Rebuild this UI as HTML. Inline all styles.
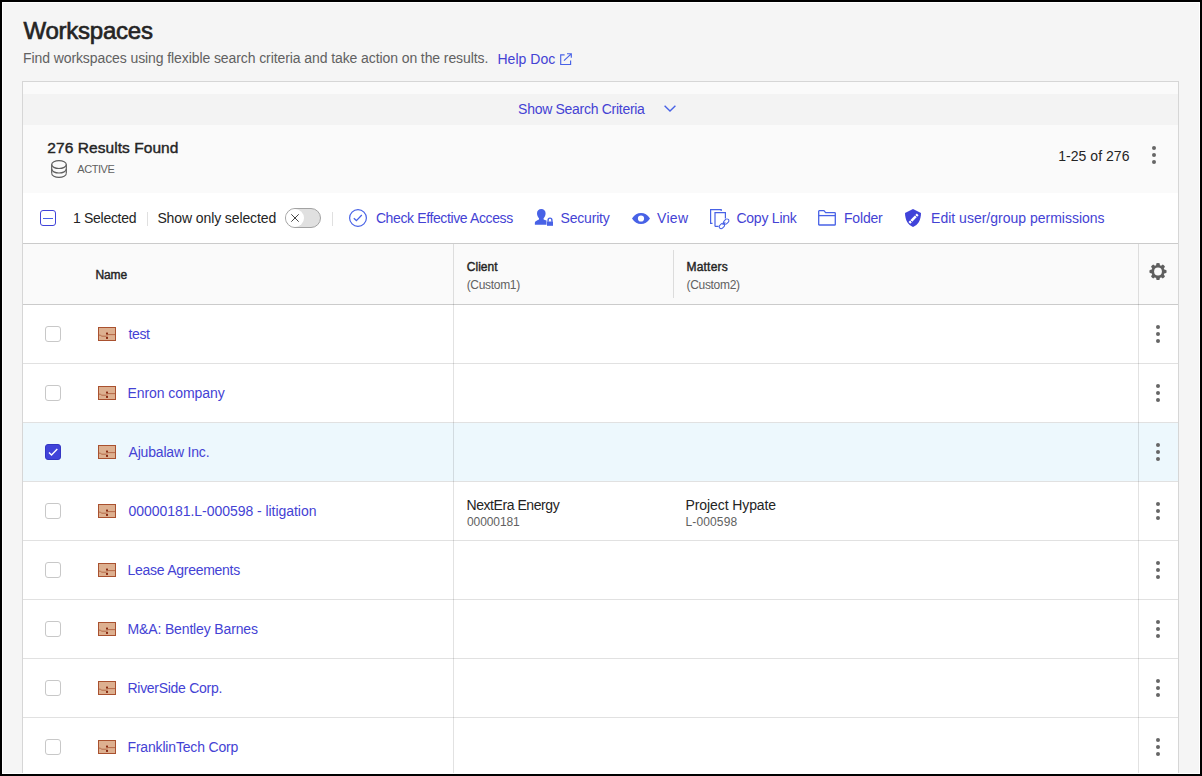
<!DOCTYPE html>
<html><head><meta charset="utf-8">
<style>
*{box-sizing:border-box;margin:0;padding:0}
html,body{width:1202px;height:776px;overflow:hidden;background:#000}
body{font-family:"Liberation Sans",sans-serif;position:relative}
.a{position:absolute;white-space:nowrap;line-height:1}
.r{position:absolute}
svg{position:absolute;overflow:visible}
</style></head><body>
<div class="r" style="left:2px;top:2px;width:1198px;height:772px;background:#fff"></div>
<div class="r" style="left:3px;top:3px;width:1196px;height:770px;background:#f5f5f5"></div>
<div class="a" style="left:23.5px;top:18.98px;font-size:24px;font-weight:400;color:#242424;letter-spacing:-0.244px;-webkit-text-stroke:0.65px #242424">Workspaces</div>
<div class="a" style="left:23px;top:50.55px;font-size:14px;font-weight:400;color:#616161;letter-spacing:-0.091px;">Find workspaces using flexible search criteria and take action on the results.</div>
<div class="a" style="left:497.4px;top:51.65px;font-size:14px;font-weight:400;color:#4442d4;letter-spacing:0.05px;">Help Doc</div>
<svg style="left:560px;top:53px" width="12" height="12" viewBox="0 0 12 12"><path d="M4.6 1.9 H0.7 V11.5 H10.6 V7.6" fill="none" stroke="#4862e6" stroke-width="1.15"/><path d="M4 7.7 L11.2 0.8 M7 0.7 H11.3 V4.7" fill="none" stroke="#4862e6" stroke-width="1.15"/></svg>
<div class="r" style="left:22px;top:81px;width:1157px;height:700px;border:1px solid #d6d6d6;background:#fafafa"></div>
<div class="r" style="left:23px;top:94px;width:1155px;height:31px;background:#f3f3f3"></div>
<div class="a" style="left:518.1px;top:102.45px;font-size:14px;font-weight:400;color:#4442d4;letter-spacing:-0.289px;">Show Search Criteria</div>
<svg style="left:664px;top:105px" width="12" height="8" viewBox="0 0 12 8"><path d="M0.6 0.8 L6 6 L11.4 0.8" fill="none" stroke="#4862e6" stroke-width="1.4"/></svg>
<div class="a" style="left:47.3px;top:139.68px;font-size:15.5px;font-weight:400;color:#242424;letter-spacing:0.06px;-webkit-text-stroke:0.4px #242424">276 Results Found</div>
<svg style="left:51px;top:160px" width="16" height="18" viewBox="0 0 16 18"><g fill="none" stroke="#5f5f5f" stroke-width="1.2"><ellipse cx="8" cy="4.6" rx="7.3" ry="3.9"/><path d="M0.7 4.6 V13.4 M15.3 4.6 V13.4"/><path d="M0.7 9.1 A7.3 3.9 0 0 0 15.3 9.1"/><path d="M0.7 13.4 A7.3 3.9 0 0 0 15.3 13.4"/></g></svg>
<div class="a" style="left:77.3px;top:164.39px;font-size:11px;font-weight:400;color:#616161;letter-spacing:-0.45px;">ACTIVE</div>
<div class="a" style="left:1058.3px;top:148.55px;font-size:14px;font-weight:400;color:#242424;letter-spacing:0.03px;">1-25 of 276</div>
<div class="r" style="left:1152px;top:146px;width:4px;height:4px;border-radius:50%;background:#666"></div><div class="r" style="left:1152px;top:153px;width:4px;height:4px;border-radius:50%;background:#666"></div><div class="r" style="left:1152px;top:160px;width:4px;height:4px;border-radius:50%;background:#666"></div>
<div class="r" style="left:23px;top:193px;width:1155px;height:51px;background:#fff;border-bottom:1px solid #cbcbcb"></div>
<div class="r" style="left:40px;top:210px;width:16px;height:16px;border:1.5px solid #4043d9;border-radius:3px;background:#fff"></div>
<div class="r" style="left:43px;top:217.5px;width:10px;height:1px;background:#4862e6"></div>
<div class="a" style="left:73px;top:211.35px;font-size:14px;font-weight:400;color:#242424;letter-spacing:-0.3px;">1 Selected</div>
<div class="r" style="left:147px;top:212px;width:1px;height:14px;background:#e0e0e0"></div>
<div class="a" style="left:157.4px;top:211.35px;font-size:14px;font-weight:400;color:#242424;letter-spacing:-0.106px;">Show only selected</div>
<div class="r" style="left:285px;top:208px;width:36px;height:20px;border:1px solid #a3a3a3;border-radius:10px;background:#e0e0e0"></div>
<div class="r" style="left:286px;top:209px;width:18px;height:18px;border-radius:50%;background:#fff"></div>
<svg style="left:291px;top:214px" width="8" height="8" viewBox="0 0 8 8"><path d="M0.3 0.3 L7.7 7.7 M7.7 0.3 L0.3 7.7" stroke="#444" stroke-width="1"/></svg>
<div class="r" style="left:332px;top:212px;width:1px;height:14px;background:#e0e0e0"></div>
<svg style="left:349px;top:209px" width="18" height="18" viewBox="0 0 18 18"><circle cx="9" cy="9" r="8.4" fill="none" stroke="#4862e6" stroke-width="1.2"/><path d="M4.8 9.3 L7.4 11.6 L12.8 6" fill="none" stroke="#4862e6" stroke-width="1.3"/></svg>
<div class="a" style="left:375.9px;top:211.35px;font-size:14px;font-weight:400;color:#4442d4;letter-spacing:-0.376px;">Check Effective Access</div>
<svg style="left:534px;top:208px" width="20" height="19" viewBox="0 0 20 19"><g fill="#4862e6"><path d="M7.3 1 C4.8 1 3 2.8 3 5.3 C3 7.2 3.8 9 5 10.3 V11.6 C3.5 12.5 1.5 13 1 14.2 C0.8 14.6 0.8 16.8 1 16.8 H12.5 V12.6 C11.5 12.1 10.3 11.9 9.6 11.6 V10.3 C10.8 9 11.6 7.2 11.6 5.3 C11.6 2.8 9.8 1 7.3 1 Z"/><rect x="13" y="13.5" width="6" height="4.3"/><path d="M14.1 13.8 V12 A1.9 1.9 0 0 1 17.9 12 V13.8" fill="none" stroke="#4862e6" stroke-width="1.4"/></g></svg>
<div class="a" style="left:560.5px;top:211.35px;font-size:14px;font-weight:400;color:#4442d4;letter-spacing:-0.186px;">Security</div>
<svg style="left:632px;top:213px" width="18" height="11" viewBox="0 0 18 11"><path d="M0 5.5 C2.5 1.6 5.5 0 9 0 C12.5 0 15.5 1.6 18 5.5 C15.5 9.4 12.5 11 9 11 C5.5 11 2.5 9.4 0 5.5 Z M9 2.4 A3.1 3.1 0 1 0 9 8.6 A3.1 3.1 0 1 0 9 2.4 Z" fill="#4862e6" fill-rule="evenodd"/></svg>
<div class="a" style="left:657px;top:211.35px;font-size:14px;font-weight:400;color:#4442d4;letter-spacing:0.333px;">View</div>
<svg style="left:710px;top:209px" width="19" height="19" viewBox="0 0 19 19"><g fill="none" stroke="#4862e6" stroke-width="1.2"><path d="M2.5 14.3 H0.6 V0.6 H11.2 V2"/><path d="M5 17.4 V3.6 H15.4 V9.5 M8.6 17.4 H5"/></g><g fill="none" stroke="#4862e6" stroke-width="1.05"><rect x="-3" y="-1.9" width="6" height="3.8" rx="1.9" transform="translate(11.9 17) rotate(-45)"/><rect x="-3" y="-1.9" width="6" height="3.8" rx="1.9" transform="translate(16.2 12.6) rotate(-45)"/><path d="M12.6 15.9 L15.3 13.4" /></g></svg>
<div class="a" style="left:736.4px;top:211.35px;font-size:14px;font-weight:400;color:#4442d4;letter-spacing:-0.225px;">Copy Link</div>
<svg style="left:818px;top:210px" width="18" height="16" viewBox="0 0 18 16"><g fill="none" stroke="#4862e6" stroke-width="1.3" stroke-linejoin="round"><path d="M0.7 14.4 V1.3 Q0.7 0.7 1.3 0.7 H6 L7.6 2.6 H16.6 Q17.3 2.6 17.3 3.3 V14.4 Q17.3 15 16.6 15 H1.3 Q0.7 15 0.7 14.4 Z"/><path d="M0.7 5.6 H17.3"/></g></svg>
<div class="a" style="left:844px;top:211.35px;font-size:14px;font-weight:400;color:#4442d4;letter-spacing:-0.18px;">Folder</div>
<svg style="left:905px;top:209px" width="16" height="18" viewBox="0 0 16 18"><path d="M8 0 L16 4 C16 11 13 16 8 18 C3 16 0 11 0 4 Z" fill="#4043d9"/><path d="M4.4 13.9 L12.7 5.4" stroke="#fff" stroke-width="2.5"/><path d="M5.3 11.3 L7.3 13.3 M10 6.1 L12 8.1" stroke="#4043d9" stroke-width="0.9"/></svg>
<div class="a" style="left:931.1px;top:211.35px;font-size:14px;font-weight:400;color:#4442d4;letter-spacing:0px;">Edit user/group permissions</div>
<div class="r" style="left:23px;top:244px;width:1155px;height:61px;background:#fafafa;border-bottom:1px solid #cbcbcb"></div>
<div class="a" style="left:95.6px;top:268.64px;font-size:12px;font-weight:400;color:#242424;letter-spacing:-0.167px;-webkit-text-stroke:0.4px #242424">Name</div>
<div class="a" style="left:466.7px;top:260.84px;font-size:12px;font-weight:400;color:#242424;letter-spacing:0.06px;-webkit-text-stroke:0.4px #242424">Client</div>
<div class="a" style="left:466.7px;top:279.34px;font-size:12px;font-weight:400;color:#616161;letter-spacing:-0.312px;">(Custom1)</div>
<div class="r" style="left:673px;top:250px;width:1px;height:48px;background:#dcdcdc"></div>
<div class="a" style="left:686.5px;top:260.84px;font-size:12px;font-weight:400;color:#242424;letter-spacing:0.2px;-webkit-text-stroke:0.4px #242424">Matters</div>
<div class="a" style="left:686.5px;top:279.34px;font-size:12px;font-weight:400;color:#616161;letter-spacing:-0.312px;">(Custom2)</div>
<svg style="left:1149px;top:263px" width="18" height="17" viewBox="0 0 18 17"><g transform="translate(9 8.5)" fill="#5f5f5f"><path d="M-2 -5.5 L-1.6 -8.3 Q0 -8.9 1.6 -8.3 L2 -5.5 Z" transform="rotate(0)"/><path d="M-2 -5.5 L-1.6 -8.3 Q0 -8.9 1.6 -8.3 L2 -5.5 Z" transform="rotate(45)"/><path d="M-2 -5.5 L-1.6 -8.3 Q0 -8.9 1.6 -8.3 L2 -5.5 Z" transform="rotate(90)"/><path d="M-2 -5.5 L-1.6 -8.3 Q0 -8.9 1.6 -8.3 L2 -5.5 Z" transform="rotate(135)"/><path d="M-2 -5.5 L-1.6 -8.3 Q0 -8.9 1.6 -8.3 L2 -5.5 Z" transform="rotate(180)"/><path d="M-2 -5.5 L-1.6 -8.3 Q0 -8.9 1.6 -8.3 L2 -5.5 Z" transform="rotate(225)"/><path d="M-2 -5.5 L-1.6 -8.3 Q0 -8.9 1.6 -8.3 L2 -5.5 Z" transform="rotate(270)"/><path d="M-2 -5.5 L-1.6 -8.3 Q0 -8.9 1.6 -8.3 L2 -5.5 Z" transform="rotate(315)"/><circle r="6.6"/></g><circle cx="9" cy="8.5" r="3.9" fill="#fafafa"/></svg>
<div class="r" style="left:23px;top:305px;width:1155px;height:59px;background:#fff;border-bottom:1px solid #e1e1e1"></div>
<div class="r" style="left:45px;top:326px;width:16px;height:16px;border:1px solid #c8c8c8;border-radius:3px;background:#fff"></div>
<svg style="left:98px;top:327px" width="18" height="14" viewBox="0 0 18 14"><rect x="0.5" y="0.5" width="17" height="13" fill="#ddb090" stroke="#a9512f" stroke-width="1"/><path d="M0.8 8 Q2.8 8.1 3.8 9.2 H8.7 M9.3 7.6 H17" fill="none" stroke="#b0613f" stroke-width="0.9"/><rect x="8" y="5.6" width="2" height="2" fill="#8a2b12"/><rect x="8" y="9.9" width="2" height="2" fill="#8a2b12"/><rect x="8.3" y="7.6" width="1.4" height="2.3" fill="#c58a6a"/></svg>
<div class="a" style="left:128.5px;top:327.15px;font-size:14px;font-weight:400;color:#4442d4;letter-spacing:-0.4px;">test</div>
<div class="r" style="left:1156px;top:325px;width:4px;height:4px;border-radius:50%;background:#666"></div><div class="r" style="left:1156px;top:332px;width:4px;height:4px;border-radius:50%;background:#666"></div><div class="r" style="left:1156px;top:339px;width:4px;height:4px;border-radius:50%;background:#666"></div>
<div class="r" style="left:23px;top:364px;width:1155px;height:59px;background:#fff;border-bottom:1px solid #e1e1e1"></div>
<div class="r" style="left:45px;top:385px;width:16px;height:16px;border:1px solid #c8c8c8;border-radius:3px;background:#fff"></div>
<svg style="left:98px;top:386px" width="18" height="14" viewBox="0 0 18 14"><rect x="0.5" y="0.5" width="17" height="13" fill="#ddb090" stroke="#a9512f" stroke-width="1"/><path d="M0.8 8 Q2.8 8.1 3.8 9.2 H8.7 M9.3 7.6 H17" fill="none" stroke="#b0613f" stroke-width="0.9"/><rect x="8" y="5.6" width="2" height="2" fill="#8a2b12"/><rect x="8" y="9.9" width="2" height="2" fill="#8a2b12"/><rect x="8.3" y="7.6" width="1.4" height="2.3" fill="#c58a6a"/></svg>
<div class="a" style="left:127.5px;top:386.15px;font-size:14px;font-weight:400;color:#4442d4;letter-spacing:-0.067px;">Enron company</div>
<div class="r" style="left:1156px;top:384px;width:4px;height:4px;border-radius:50%;background:#666"></div><div class="r" style="left:1156px;top:391px;width:4px;height:4px;border-radius:50%;background:#666"></div><div class="r" style="left:1156px;top:398px;width:4px;height:4px;border-radius:50%;background:#666"></div>
<div class="r" style="left:23px;top:423px;width:1155px;height:59px;background:#edf8fd;border-bottom:1px solid #e1e1e1"></div>
<div class="r" style="left:45px;top:444px;width:16px;height:16px;border:1px solid #3336c4;border-radius:3px;background:#4043d9"></div>
<svg style="left:45px;top:444px" width="16" height="16" viewBox="0 0 16 16"><path d="M4 8.6 L6.5 11 L12.3 5" fill="none" stroke="#fff" stroke-width="1.4"/></svg>
<svg style="left:98px;top:445px" width="18" height="14" viewBox="0 0 18 14"><rect x="0.5" y="0.5" width="17" height="13" fill="#ddb090" stroke="#a9512f" stroke-width="1"/><path d="M0.8 8 Q2.8 8.1 3.8 9.2 H8.7 M9.3 7.6 H17" fill="none" stroke="#b0613f" stroke-width="0.9"/><rect x="8" y="5.6" width="2" height="2" fill="#8a2b12"/><rect x="8" y="9.9" width="2" height="2" fill="#8a2b12"/><rect x="8.3" y="7.6" width="1.4" height="2.3" fill="#c58a6a"/></svg>
<div class="a" style="left:128.5px;top:445.15px;font-size:14px;font-weight:400;color:#4442d4;letter-spacing:-0.183px;">Ajubalaw Inc.</div>
<div class="r" style="left:1156px;top:443px;width:4px;height:4px;border-radius:50%;background:#666"></div><div class="r" style="left:1156px;top:450px;width:4px;height:4px;border-radius:50%;background:#666"></div><div class="r" style="left:1156px;top:457px;width:4px;height:4px;border-radius:50%;background:#666"></div>
<div class="r" style="left:23px;top:482px;width:1155px;height:59px;background:#fff;border-bottom:1px solid #e1e1e1"></div>
<div class="r" style="left:45px;top:503px;width:16px;height:16px;border:1px solid #c8c8c8;border-radius:3px;background:#fff"></div>
<svg style="left:98px;top:504px" width="18" height="14" viewBox="0 0 18 14"><rect x="0.5" y="0.5" width="17" height="13" fill="#ddb090" stroke="#a9512f" stroke-width="1"/><path d="M0.8 8 Q2.8 8.1 3.8 9.2 H8.7 M9.3 7.6 H17" fill="none" stroke="#b0613f" stroke-width="0.9"/><rect x="8" y="5.6" width="2" height="2" fill="#8a2b12"/><rect x="8" y="9.9" width="2" height="2" fill="#8a2b12"/><rect x="8.3" y="7.6" width="1.4" height="2.3" fill="#c58a6a"/></svg>
<div class="a" style="left:128.5px;top:504.15px;font-size:14px;font-weight:400;color:#4442d4;letter-spacing:-0.041px;">00000181.L-000598 - litigation</div>
<div class="r" style="left:1156px;top:502px;width:4px;height:4px;border-radius:50%;background:#666"></div><div class="r" style="left:1156px;top:509px;width:4px;height:4px;border-radius:50%;background:#666"></div><div class="r" style="left:1156px;top:516px;width:4px;height:4px;border-radius:50%;background:#666"></div>
<div class="r" style="left:23px;top:541px;width:1155px;height:59px;background:#fff;border-bottom:1px solid #e1e1e1"></div>
<div class="r" style="left:45px;top:562px;width:16px;height:16px;border:1px solid #c8c8c8;border-radius:3px;background:#fff"></div>
<svg style="left:98px;top:563px" width="18" height="14" viewBox="0 0 18 14"><rect x="0.5" y="0.5" width="17" height="13" fill="#ddb090" stroke="#a9512f" stroke-width="1"/><path d="M0.8 8 Q2.8 8.1 3.8 9.2 H8.7 M9.3 7.6 H17" fill="none" stroke="#b0613f" stroke-width="0.9"/><rect x="8" y="5.6" width="2" height="2" fill="#8a2b12"/><rect x="8" y="9.9" width="2" height="2" fill="#8a2b12"/><rect x="8.3" y="7.6" width="1.4" height="2.3" fill="#c58a6a"/></svg>
<div class="a" style="left:127.5px;top:563.15px;font-size:14px;font-weight:400;color:#4442d4;letter-spacing:-0.267px;">Lease Agreements</div>
<div class="r" style="left:1156px;top:561px;width:4px;height:4px;border-radius:50%;background:#666"></div><div class="r" style="left:1156px;top:568px;width:4px;height:4px;border-radius:50%;background:#666"></div><div class="r" style="left:1156px;top:575px;width:4px;height:4px;border-radius:50%;background:#666"></div>
<div class="r" style="left:23px;top:600px;width:1155px;height:59px;background:#fff;border-bottom:1px solid #e1e1e1"></div>
<div class="r" style="left:45px;top:621px;width:16px;height:16px;border:1px solid #c8c8c8;border-radius:3px;background:#fff"></div>
<svg style="left:98px;top:622px" width="18" height="14" viewBox="0 0 18 14"><rect x="0.5" y="0.5" width="17" height="13" fill="#ddb090" stroke="#a9512f" stroke-width="1"/><path d="M0.8 8 Q2.8 8.1 3.8 9.2 H8.7 M9.3 7.6 H17" fill="none" stroke="#b0613f" stroke-width="0.9"/><rect x="8" y="5.6" width="2" height="2" fill="#8a2b12"/><rect x="8" y="9.9" width="2" height="2" fill="#8a2b12"/><rect x="8.3" y="7.6" width="1.4" height="2.3" fill="#c58a6a"/></svg>
<div class="a" style="left:127.5px;top:622.15px;font-size:14px;font-weight:400;color:#4442d4;letter-spacing:-0.144px;">M&amp;A: Bentley Barnes</div>
<div class="r" style="left:1156px;top:620px;width:4px;height:4px;border-radius:50%;background:#666"></div><div class="r" style="left:1156px;top:627px;width:4px;height:4px;border-radius:50%;background:#666"></div><div class="r" style="left:1156px;top:634px;width:4px;height:4px;border-radius:50%;background:#666"></div>
<div class="r" style="left:23px;top:659px;width:1155px;height:59px;background:#fff;border-bottom:1px solid #e1e1e1"></div>
<div class="r" style="left:45px;top:680px;width:16px;height:16px;border:1px solid #c8c8c8;border-radius:3px;background:#fff"></div>
<svg style="left:98px;top:681px" width="18" height="14" viewBox="0 0 18 14"><rect x="0.5" y="0.5" width="17" height="13" fill="#ddb090" stroke="#a9512f" stroke-width="1"/><path d="M0.8 8 Q2.8 8.1 3.8 9.2 H8.7 M9.3 7.6 H17" fill="none" stroke="#b0613f" stroke-width="0.9"/><rect x="8" y="5.6" width="2" height="2" fill="#8a2b12"/><rect x="8" y="9.9" width="2" height="2" fill="#8a2b12"/><rect x="8.3" y="7.6" width="1.4" height="2.3" fill="#c58a6a"/></svg>
<div class="a" style="left:127.5px;top:681.15px;font-size:14px;font-weight:400;color:#4442d4;letter-spacing:-0.286px;">RiverSide Corp.</div>
<div class="r" style="left:1156px;top:679px;width:4px;height:4px;border-radius:50%;background:#666"></div><div class="r" style="left:1156px;top:686px;width:4px;height:4px;border-radius:50%;background:#666"></div><div class="r" style="left:1156px;top:693px;width:4px;height:4px;border-radius:50%;background:#666"></div>
<div class="r" style="left:23px;top:718px;width:1155px;height:59px;background:#fff;border-bottom:1px solid #e1e1e1"></div>
<div class="r" style="left:45px;top:739px;width:16px;height:16px;border:1px solid #c8c8c8;border-radius:3px;background:#fff"></div>
<svg style="left:98px;top:740px" width="18" height="14" viewBox="0 0 18 14"><rect x="0.5" y="0.5" width="17" height="13" fill="#ddb090" stroke="#a9512f" stroke-width="1"/><path d="M0.8 8 Q2.8 8.1 3.8 9.2 H8.7 M9.3 7.6 H17" fill="none" stroke="#b0613f" stroke-width="0.9"/><rect x="8" y="5.6" width="2" height="2" fill="#8a2b12"/><rect x="8" y="9.9" width="2" height="2" fill="#8a2b12"/><rect x="8.3" y="7.6" width="1.4" height="2.3" fill="#c58a6a"/></svg>
<div class="a" style="left:127.5px;top:740.15px;font-size:14px;font-weight:400;color:#4442d4;letter-spacing:-0.175px;">FranklinTech Corp</div>
<div class="r" style="left:1156px;top:738px;width:4px;height:4px;border-radius:50%;background:#666"></div><div class="r" style="left:1156px;top:745px;width:4px;height:4px;border-radius:50%;background:#666"></div><div class="r" style="left:1156px;top:752px;width:4px;height:4px;border-radius:50%;background:#666"></div>
<div class="a" style="left:466.5px;top:498.15px;font-size:14px;font-weight:400;color:#242424;letter-spacing:-0.438px;">NextEra Energy</div>
<div class="a" style="left:467px;top:515.84px;font-size:12px;font-weight:400;color:#616161;letter-spacing:-0.086px;">00000181</div>
<div class="a" style="left:685.5px;top:498.15px;font-size:14px;font-weight:400;color:#242424;letter-spacing:-0.092px;">Project Hypate</div>
<div class="a" style="left:685.5px;top:515.84px;font-size:12px;font-weight:400;color:#616161;letter-spacing:0.129px;">L-000598</div>
<div class="r" style="left:453px;top:244px;width:1px;height:540px;background:rgba(0,0,0,0.115)"></div>
<div class="r" style="left:1138px;top:244px;width:1px;height:540px;background:rgba(0,0,0,0.115)"></div>
<div class="r" style="left:0px;top:774px;width:1202px;height:2px;background:#000"></div>
<div class="r" style="left:2px;top:773px;width:1198px;height:1px;background:#fff"></div>
</body></html>
